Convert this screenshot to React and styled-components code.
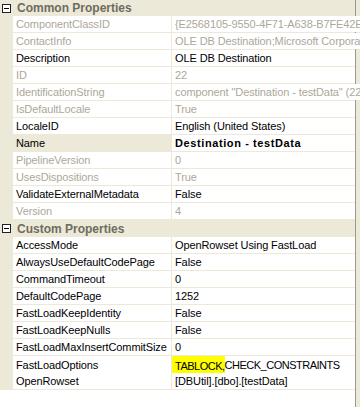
import React from 'react';
import styled, { createGlobalStyle } from 'styled-components';

const beige = '#ECE9D8';
const grayText = '#ACA899';

const GlobalStyle = createGlobalStyle`
    html, body {
        margin: 0;
        padding: 0;
        background: #fff;
    }
    body {
        font-family: "Liberation Sans", Arial, sans-serif;
        font-size: 11px;
        color: #000;
    }
`;

const Frame = styled.div`
    display: flex;
    width: 360px;
    height: 407px;
    overflow: hidden;
`;

const Grid = styled.div`
    width: 355px;
    display: flex;
    flex-direction: column;
    background: #fff;
`;

const ScrollEdge = styled.div`
    flex: 1;
    border-left: 1px solid #9c9a8f;
    background: ${beige};
`;

const CategoryRow = styled.div`
    box-sizing: border-box;
    height: ${({ $height }) => $height}px;
    display: flex;
    align-items: center;
    gap: 6px;
    padding-left: 2px;
    background: ${beige};
    color: #6E6C60;
    font-weight: bold;
    font-size: 12px;
`;

const Toggle = styled.span`
    position: relative;
    box-sizing: border-box;
    width: 9px;
    height: 9px;
    border: 1px solid #222;
    background: #fff;
    &::after {
        content: '';
        position: absolute;
        left: 1px;
        right: 1px;
        top: 3px;
        height: 1px;
        background: #000;
    }
`;

const PropRow = styled.div`
    box-sizing: border-box;
    height: 17px;
    display: grid;
    grid-template-columns: 12px 158px 1fr;
    column-gap: 1px;
    border-bottom: 1px solid ${beige};
    background: ${beige};
`;

const Cell = styled.div`
    display: flex;
    align-items: center;
    padding-left: 3px;
    background: ${({ $selected }) => ($selected ? beige : '#fff')};
    color: ${({ $disabled }) => ($disabled ? grayText : '#000')};
    font-weight: ${({ $bold }) => ($bold ? 'bold' : 'normal')};
    letter-spacing: ${({ $bold }) => ($bold ? '0.6px' : '-0.1px')};
    white-space: nowrap;
    overflow: hidden;
`;

const ValueCell = styled(Cell)`
    overflow: visible;
    clip-path: inset(-6px 0 0 0);
`;

const Highlight = styled.span`
    background: #FFFF00;
    padding: 4px 0 2px 3px;
    margin-left: -3px;
`;

const Caps = styled.span`
    letter-spacing: -0.5px;
`;

const common = [
    { name: 'ComponentClassID', value: '{E2568105-9550-4F71-A638-B7FE42E8', disabled: true },
    { name: 'ContactInfo', value: 'OLE DB Destination;Microsoft Corporation', disabled: true },
    { name: 'Description', value: 'OLE DB Destination' },
    { name: 'ID', value: '22', disabled: true },
    { name: 'IdentificationString', value: 'component "Destination - testData" (22)', disabled: true },
    { name: 'IsDefaultLocale', value: 'True', disabled: true },
    { name: 'LocaleID', value: 'English (United States)' },
    { name: 'Name', value: 'Destination - testData', selected: true, bold: true },
    { name: 'PipelineVersion', value: '0', disabled: true },
    { name: 'UsesDispositions', value: 'True', disabled: true },
    { name: 'ValidateExternalMetadata', value: 'False' },
    { name: 'Version', value: '4', disabled: true },
];

const custom = [
    { name: 'AccessMode', value: 'OpenRowset Using FastLoad' },
    { name: 'AlwaysUseDefaultCodePage', value: 'False' },
    { name: 'CommandTimeout', value: '0' },
    { name: 'DefaultCodePage', value: '1252' },
    { name: 'FastLoadKeepIdentity', value: 'False' },
    { name: 'FastLoadKeepNulls', value: 'False' },
    { name: 'FastLoadMaxInsertCommitSize', value: '0' },
    { name: 'FastLoadOptions', value: 'CHECK_CONSTRAINTS', mark: 'TABLOCK,' },
    { name: 'OpenRowset', value: '[DBUtil].[dbo].[testData]' },
];

const Property = ({ name, value, disabled, selected, bold, mark }) => (
    <PropRow>
        <span />
        <Cell $disabled={disabled} $selected={selected}>{name}</Cell>
        <ValueCell $disabled={disabled} $bold={bold}>
            {mark && <Highlight><Caps>{mark}</Caps></Highlight>}
            {mark ? <Caps>{value}</Caps> : value}
        </ValueCell>
    </PropRow>
);

const Category = ({ title, height, items }) => (
    <>
        <CategoryRow $height={height}>
            <Toggle />
            {title}
        </CategoryRow>
        {items.map(item => <Property key={item.name} {...item} />)}
    </>
);

const App = () => (
    <>
        <GlobalStyle />
        <Frame>
            <Grid>
                <Category title="Common Properties" height={16} items={common} />
                <Category title="Custom Properties" height={17} items={custom} />
            </Grid>
            <ScrollEdge />
        </Frame>
    </>
);

export default App;
